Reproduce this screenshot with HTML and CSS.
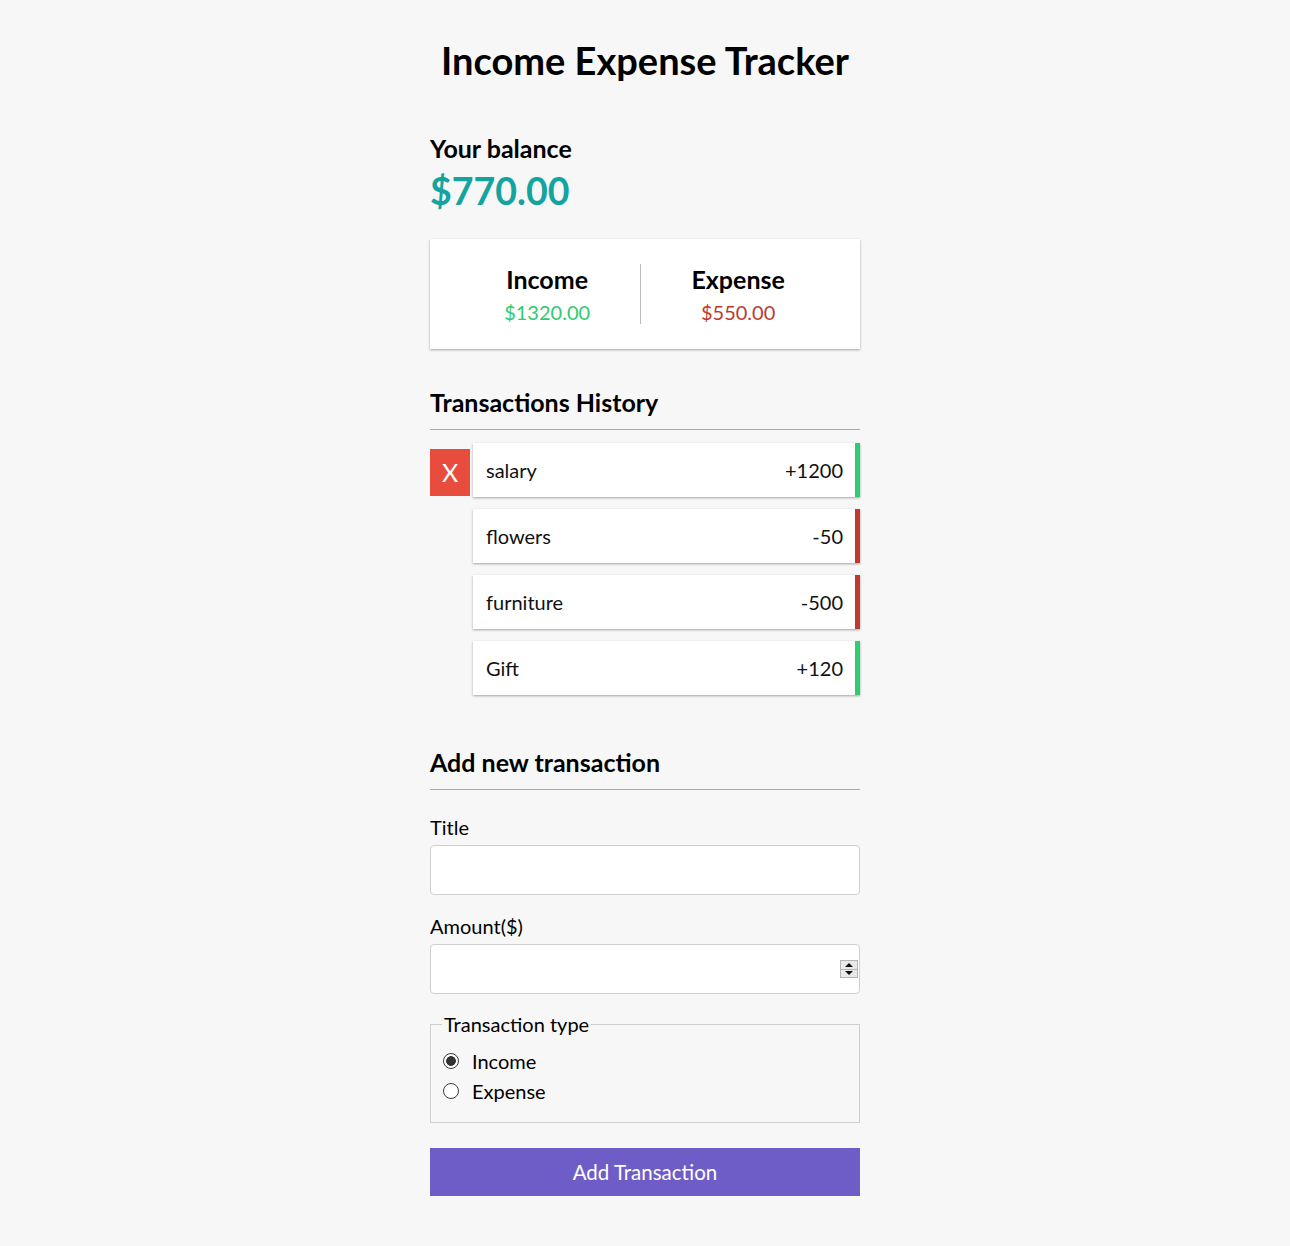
FILE: index.html
```html
<!DOCTYPE html>
<html lang="en">
<head>
<meta charset="utf-8">
<title>Income Expense Tracker</title>
<link rel="stylesheet" href="styles.css">
</head>
<body>
<div class="container">
  <h1 class="title">Income Expense Tracker</h1>

  <h4 class="balance-label">Your balance</h4>
  <div class="balance">$770.00</div>

  <div class="inc-exp">
    <div class="col">
      <h4 class="col-title">Income</h4>
      <p class="money plus">$1320.00</p>
    </div>
    <div class="col">
      <h4 class="col-title">Expense</h4>
      <p class="money minus">$550.00</p>
    </div>
  </div>

  <h3 class="section">Transactions History</h3>
  <ul class="list">
    <li class="row">
      <button class="del">X</button>
      <div class="item plus"><span>salary</span><span>+1200</span></div>
    </li>
    <li class="row">
      <button class="del hidden">X</button>
      <div class="item minus"><span>flowers</span><span>-50</span></div>
    </li>
    <li class="row">
      <button class="del hidden">X</button>
      <div class="item minus"><span>furniture</span><span>-500</span></div>
    </li>
    <li class="row">
      <button class="del hidden">X</button>
      <div class="item plus"><span>Gift</span><span>+120</span></div>
    </li>
  </ul>

  <h3 class="section section-add">Add new transaction</h3>
  <form class="form">
    <label class="field-label first" for="title">Title</label>
    <input class="field" type="text" id="title">
    <label class="field-label" for="amount">Amount($)</label>
    <div class="num-wrap">
      <input class="field" type="number" id="amount">
      <span class="spin" aria-hidden="true">
        <span class="spin-btn"><span class="tri up"></span></span>
        <span class="spin-btn"><span class="tri down"></span></span>
      </span>
    </div>
    <fieldset class="type">
      <legend class="type-legend">Transaction type</legend>
      <label class="radio-row"><input class="radio" type="radio" name="type" checked><span>Income</span></label>
      <label class="radio-row"><input class="radio" type="radio" name="type"><span>Expense</span></label>
    </fieldset>
    <button type="button" class="btn">Add Transaction</button>
  </form>
</div>
</body>
</html>
```
FILE: styles.css
```css
* { box-sizing: border-box; }

body {
  margin: 0;
  background: #f7f7f7;
  font-family: Lato, "Open Sans", sans-serif;
  color: #000;
}

.container {
  width: 430px;
  margin: 0 auto;
  padding: 37px 0 50px;
}

.title {
  margin: 0;
  font-size: 38px;
  line-height: 46px;
  font-weight: 700;
  text-align: center;
}

.balance-label {
  margin: 50px 0 0;
  font-size: 25px;
  line-height: 30px;
  font-weight: 700;
}

.balance {
  margin-top: 5px;
  font-size: 37.5px;
  line-height: 46px;
  font-weight: 700;
  color: #13a4a0;
}

.inc-exp {
  margin-top: 25px;
  background: #fff;
  box-shadow: 0 1px 3px rgba(0,0,0,0.12), 0 1px 2px rgba(0,0,0,0.24);
  padding: 25px 25px 25px 24px;
  display: flex;
}

.col {
  flex: 1 1 auto;
  text-align: center;
}

.col:first-child { border-right: 1px solid #bdbdbd; }

.col-title {
  margin: 0;
  font-size: 25px;
  line-height: 30px;
  font-weight: 700;
}

.money {
  margin: 6px 0 0;
  font-size: 20px;
  line-height: 24px;
}

.money.plus { color: #2ecc71; }
.money.minus { color: #c0392b; }

.section {
  margin: 38px 0 0;
  font-size: 25px;
  line-height: 30px;
  font-weight: 700;
  padding-bottom: 12px;
  border-bottom: 1px solid #aaa;
}

.section-add { margin-top: 52px; }

.list {
  list-style: none;
  margin: 13px 0 0;
  padding: 0;
  display: flex;
  flex-direction: column;
  gap: 12px;
}

.row {
  display: flex;
  align-items: flex-start;
  gap: 3px;
}

.del {
  width: 40px;
  height: 47px;
  margin-top: 6px;
  flex: none;
  border: 0;
  padding: 0;
  background: #e74c3c;
  color: #fff;
  font-family: Lato, "Open Sans", sans-serif;
  font-size: 25px;
  line-height: 47px;
}

.del.hidden { visibility: hidden; }

.item {
  flex: 1;
  display: flex;
  justify-content: space-between;
  background: #fff;
  box-shadow: 0 1px 3px rgba(0,0,0,0.12), 0 1px 2px rgba(0,0,0,0.24);
  padding: 16px 12px 16px 13px;
  font-size: 20px;
  line-height: 22px;
  color: #111;
}

.item.plus { border-right: 5px solid #2ecc71; }
.item.minus { border-right: 5px solid #c0392b; }

.form { margin: 0; }

.field-label {
  display: block;
  margin: 19px 0 6px;
  font-size: 20px;
  line-height: 24px;
}

.field-label.first { margin-top: 25px; }

.field {
  display: block;
  width: 100%;
  height: 50px;
  margin: 0;
  padding: 12px;
  border: 1px solid #cfcfcf;
  border-radius: 4px;
  background: #fff;
  font-family: Lato, "Open Sans", sans-serif;
  font-size: 20px;
  line-height: 24px;
}

.num-wrap { position: relative; }

.num-wrap .field::-webkit-inner-spin-button,
.num-wrap .field::-webkit-outer-spin-button {
  -webkit-appearance: none;
  margin: 0;
}

.spin {
  position: absolute;
  right: 2px;
  top: 16px;
  width: 18px;
  height: 18px;
  display: flex;
  flex-direction: column;
  border: 1px solid #b5b5b5;
  background: #e9e9e9;
}

.spin-btn {
  flex: 1;
  display: flex;
  align-items: center;
  justify-content: center;
}

.spin-btn + .spin-btn { border-top: 1px solid #b5b5b5; }

.tri {
  width: 0;
  height: 0;
  border-left: 4px solid transparent;
  border-right: 4px solid transparent;
}

.tri.up { border-bottom: 4px solid #111; }
.tri.down { border-top: 4px solid #111; }

.type {
  margin: 18px 0 0;
  padding: 10px 11px 16px;
  border: 1px solid #cfcfcf;
}

.type-legend {
  padding: 0 2px;
  font-size: 20px;
  line-height: 24px;
}

.radio-row {
  display: flex;
  align-items: center;
  height: 30px;
  font-size: 20px;
  line-height: 24px;
}

.radio {
  appearance: none;
  -webkit-appearance: none;
  width: 16px;
  height: 16px;
  margin: 0 13px 0 1px;
  border: 1px solid #3c3c3c;
  border-radius: 50%;
  background: #fff;
}

.radio:checked {
  background: radial-gradient(circle, #333 0 4.5px, #fff 5.2px);
}

.btn {
  display: block;
  width: 100%;
  margin-top: 25px;
  height: 48px;
  border: 0;
  background: #6f5dc7;
  color: #fff;
  font-family: Lato, "Open Sans", sans-serif;
  font-size: 20.5px;
  line-height: 24px;
  padding: 12px;
}
```
